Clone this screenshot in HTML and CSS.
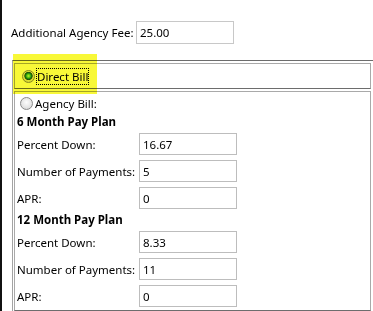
FILE: index.html
```html
<!DOCTYPE html>
<html lang="en">
<head>
    <meta charset="UTF-8">
    <meta name="viewport" content="width=device-width, initial-scale=1.0">
    <title>Billing Options</title>
    <link rel="stylesheet" href="styles.css">
</head>
<body>
    <div class="window">
        <div class="fee-row">
            <label for="fee" class="fee-label">Additional Agency Fee:</label>
            <input type="text" id="fee" class="field fee-field" value="25.00">
        </div>

        <div class="billing-group">
            <!-- Direct bill option -->
            <div class="panel direct-panel">
                <label class="radio-option direct-option">
                    <span class="radio checked"></span>
                    <span class="focus-text">Direct Bill</span>
                </label>
            </div>

            <!-- Agency bill option with pay plans -->
            <div class="panel agency-panel">
                <label class="radio-option agency-option">
                    <span class="radio"></span>
                    <span>Agency Bill:</span>
                </label>

                <div class="plan-title">6 Month Pay Plan</div>
                <div class="plan-grid">
                    <label for="down6">Percent Down:</label>
                    <input type="text" id="down6" class="field" value="16.67">
                    <label for="payments6">Number of Payments:</label>
                    <input type="text" id="payments6" class="field" value="5">
                    <label for="apr6">APR:</label>
                    <input type="text" id="apr6" class="field" value="0">
                </div>

                <div class="plan-title">12 Month Pay Plan</div>
                <div class="plan-grid">
                    <label for="down12">Percent Down:</label>
                    <input type="text" id="down12" class="field" value="8.33">
                    <label for="payments12">Number of Payments:</label>
                    <input type="text" id="payments12" class="field" value="11">
                    <label for="apr12">APR:</label>
                    <input type="text" id="apr12" class="field" value="0">
                </div>
            </div>
        </div>

        <div class="highlight"></div>
    </div>
</body>
</html>
```

FILE: styles.css
```css
body {
    margin: 0;
    background-color: #fff;
    font-family: "Noto Sans", sans-serif;
    font-size: 11.5px;
    color: #000;
}

.window {
    position: relative;
    height: 311px;
    box-sizing: border-box;
    border-left: 2px solid #111;
    padding-top: 21px;
    overflow: hidden;
}

.fee-row {
    display: flex;
    align-items: center;
    margin-left: 9px;
}

.fee-label {
    width: 125px;
}

.field {
    box-sizing: border-box;
    width: 98px;
    height: 22px;
    margin: 0;
    padding: 0 3px;
    border: 1px solid #bdbdbd;
    font-family: "Noto Sans", sans-serif;
    font-size: 11.5px;
    color: #000;
    background-color: #fff;
    outline: none;
}

.fee-field {
    height: 23px;
    border-color: #c8c8c8;
}

.billing-group {
    margin-top: 16px;
    margin-left: 10px;
    padding: 2px 0 0 1px;
    border-top: 1px solid #6d6d6d;
    border-left: 1px solid #a3a3a3;
}

.panel {
    box-sizing: border-box;
    width: 357px;
    border: 1px solid #a9a9a9;
    border-bottom-color: #6d6d6d;
}

.direct-panel {
    height: 26px;
    padding-top: 5px;
}

.agency-panel {
    margin-top: 2px;
    padding: 4px 0 3px 2px;
}

.radio-option {
    display: flex;
    align-items: center;
    height: 15px;
}

.direct-option {
    padding-left: 7px;
}

.agency-option {
    padding-left: 3px;
}

.radio {
    box-sizing: border-box;
    width: 13px;
    height: 13px;
    border: 1px solid #8a8a8a;
    border-radius: 50%;
    background: radial-gradient(circle at 50% 40%, #fdfdfd 0, #e6e6e6 55%, #cfcfcf 100%);
    margin-right: 2px;
}

.radio.checked {
    margin-right: 1px;
    background:
        radial-gradient(circle at 50% 45%, #c6f7b0 0, #52c44c 1.8px, #1a8a1a 2.8px, #1f4a1f 3.8px, transparent 4.5px),
        radial-gradient(circle at 50% 40%, #fdfdfd 0, #e6e6e6 55%, #cfcfcf 100%);
}

.focus-text {
    border: 1px dotted #000;
    line-height: 15px;
}

.plan-title {
    font-weight: bold;
    line-height: 22px;
}

.plan-grid {
    display: grid;
    grid-template-columns: 122px 98px;
    row-gap: 5px;
    align-items: center;
}

.highlight {
    position: absolute;
    left: 11px;
    top: 54px;
    width: 84px;
    height: 40px;
    background-color: #f8f838;
    mix-blend-mode: multiply;
}
```
